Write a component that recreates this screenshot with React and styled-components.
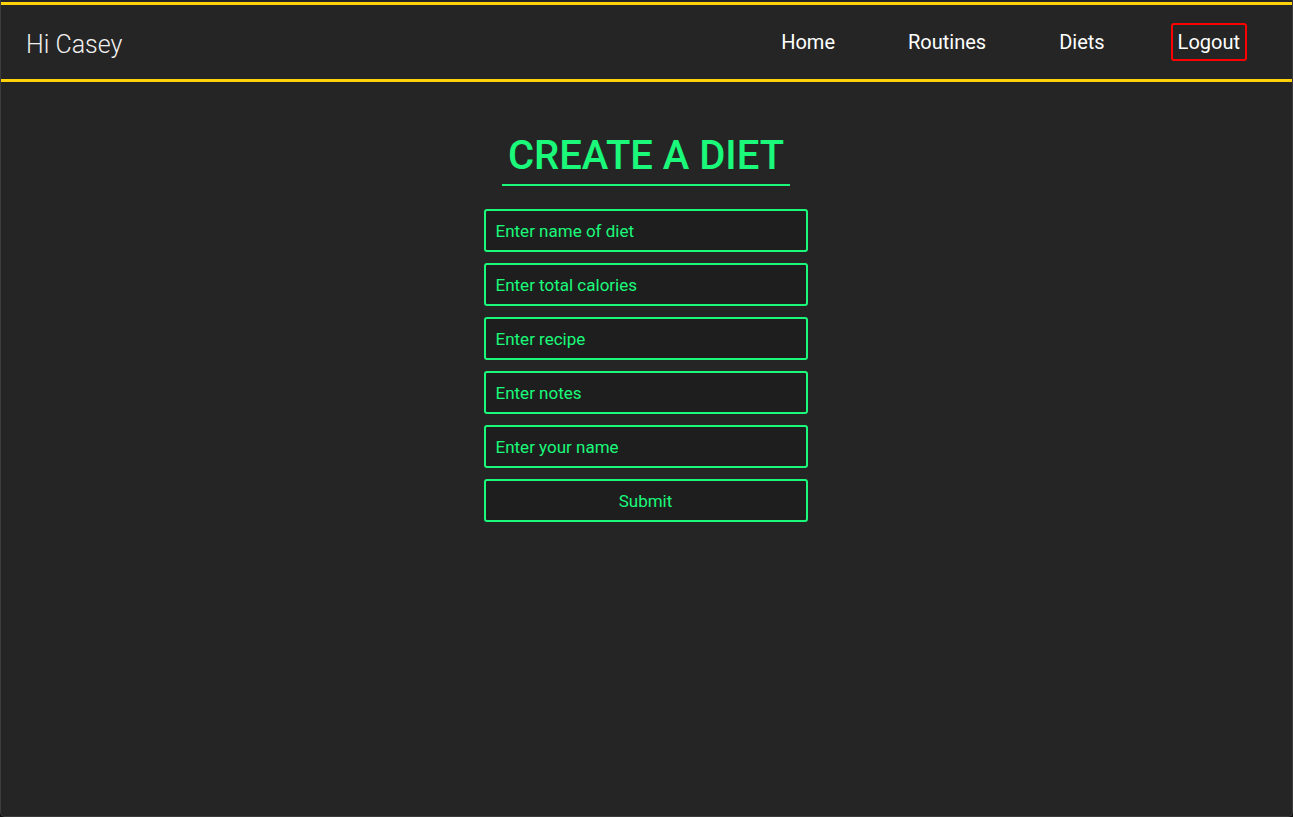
import React from 'react';
import styled, { createGlobalStyle } from 'styled-components';

const green = '#1af97a';

const GlobalStyle = createGlobalStyle`
  html, body {
    margin: 0;
    padding: 0;
    background: #111;
  }
  body {
    font-family: Roboto, "Liberation Sans", sans-serif;
  }
`;

const Frame = styled.div`
  box-sizing: border-box;
  width: 1293px;
  height: 817px;
  background: #252525;
  border: 1px solid #3c3c3c;
  border-top: none;
  border-radius: 0 0 5px 5px;
  overflow: hidden;
  padding-top: 2px;
`;

const NavBar = styled.header`
  display: flex;
  align-items: center;
  justify-content: space-between;
  height: 74px;
  border-top: 3px solid #ffd20a;
  border-bottom: 3px solid #ffd20a;
  padding: 0 45px 0 25px;
`;

const Greeting = styled.div`
  color: #f0f0f0;
  font-size: 25px;
  font-weight: 300;
  margin-top: 4px;
`;

const Links = styled.nav`
  display: flex;
  align-items: center;
  gap: 59px;
`;

const NavLink = styled.a`
  color: #fff;
  font-size: 20px;
  text-decoration: none;
  padding: 5px 5px;
  border: 2px solid ${p => (p.$boxed ? '#ff0000' : 'transparent')};
  border-radius: 3px;
`;

const Main = styled.main`
  display: flex;
  flex-direction: column;
  align-items: center;
  padding-top: 50px;
`;

const Title = styled.h1`
  margin: 0 0 0 -1px;
  color: ${green};
  font-size: 40px;
  font-weight: 500;
  padding: 0 6px 5px;
  border-bottom: 2px solid ${green};
  line-height: 47px;
`;

const Form = styled.form`
  display: flex;
  flex-direction: column;
  gap: 11px;
  margin: 23px 0 0 -2px;
  width: 324px;
`;

const Field = styled.input`
  box-sizing: border-box;
  height: 43px;
  width: 100%;
  background: #1e1e1e;
  border: 2px solid ${green};
  border-radius: 3px;
  color: ${green};
  font-family: inherit;
  font-size: 17px;
  padding: 0 10px;
  outline: none;
  &::placeholder {
    color: ${green};
    opacity: 1;
  }
`;

const Submit = styled.button`
  box-sizing: border-box;
  height: 43px;
  width: 100%;
  background: #1e1e1e;
  border: 2px solid ${green};
  border-radius: 3px;
  color: ${green};
  font-family: inherit;
  font-size: 17px;
  padding-top: 1px;
`;

const fields = [
  'Enter name of diet',
  'Enter total calories',
  'Enter recipe',
  'Enter notes',
  'Enter your name',
];

export default function App() {
  return (
    <>
      <GlobalStyle />
      <Frame>
        <NavBar>
          <Greeting>Hi Casey</Greeting>
          <Links>
            <NavLink>Home</NavLink>
            <NavLink>Routines</NavLink>
            <NavLink>Diets</NavLink>
            <NavLink $boxed>Logout</NavLink>
          </Links>
        </NavBar>
        <Main>
          <Title>CREATE A DIET</Title>
          <Form onSubmit={e => e.preventDefault()}>
            {fields.map(f => <Field key={f} placeholder={f} />)}
            <Submit type="submit">Submit</Submit>
          </Form>
        </Main>
      </Frame>
    </>
  );
}
